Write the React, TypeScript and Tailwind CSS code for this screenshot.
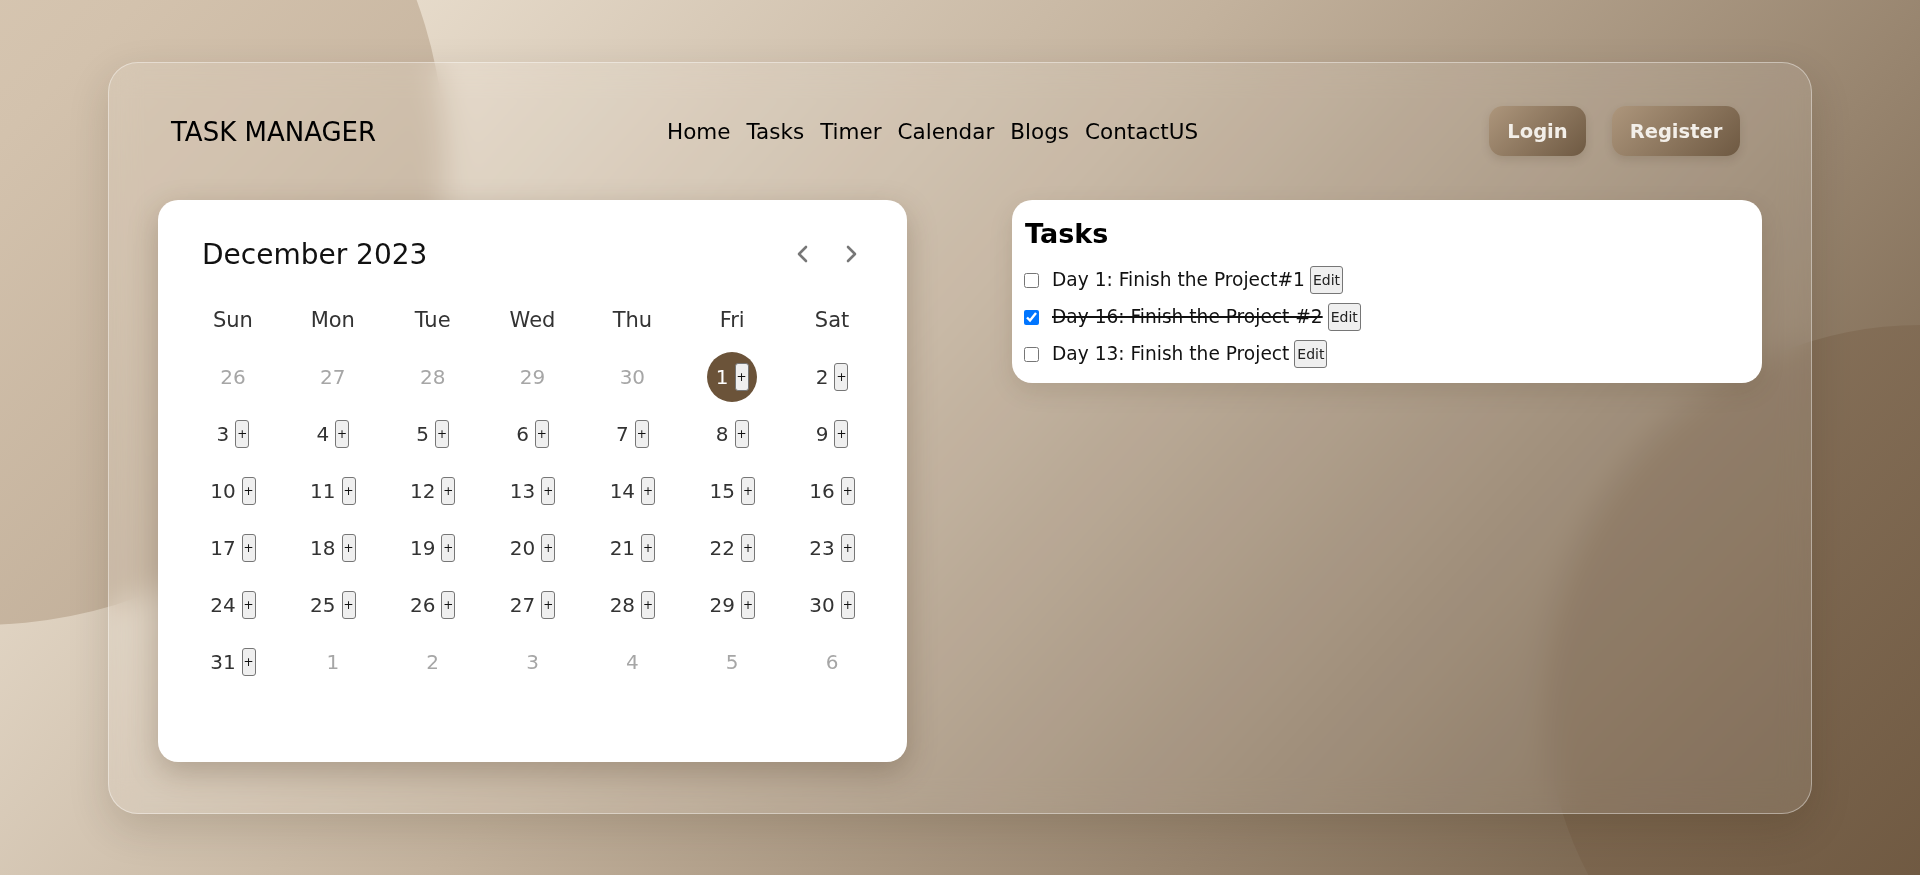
import React from "react";

type Day = { n: number; cur: boolean; sel?: boolean };

const weeks: Day[][] = [
  [
    { n: 26, cur: false },
    { n: 27, cur: false },
    { n: 28, cur: false },
    { n: 29, cur: false },
    { n: 30, cur: false },
    { n: 1, cur: true, sel: true },
    { n: 2, cur: true },
  ],
  [3, 4, 5, 6, 7, 8, 9].map((n) => ({ n, cur: true })),
  [10, 11, 12, 13, 14, 15, 16].map((n) => ({ n, cur: true })),
  [17, 18, 19, 20, 21, 22, 23].map((n) => ({ n, cur: true })),
  [24, 25, 26, 27, 28, 29, 30].map((n) => ({ n, cur: true })),
  [
    { n: 31, cur: true },
    { n: 1, cur: false },
    { n: 2, cur: false },
    { n: 3, cur: false },
    { n: 4, cur: false },
    { n: 5, cur: false },
    { n: 6, cur: false },
  ],
];

const weekdays = ["Sun", "Mon", "Tue", "Wed", "Thu", "Fri", "Sat"];

function PlusButton() {
  return (
    <button className="ml-[6px] flex h-[28px] w-[14px] items-center justify-center rounded-[3px] border border-[#767676] bg-[#efefef] p-0 text-[12px] leading-none text-[#111]">
      +
    </button>
  );
}

function DayCell({ d }: { d: Day }) {
  if (d.sel) {
    return (
      <div className="flex h-[57px] items-center justify-center">
        <div className="flex h-[50px] w-[50px] items-center justify-center rounded-full bg-[#6b5339]">
          <span className="text-[20px] leading-[28px] text-white">{d.n}</span>
          <PlusButton />
        </div>
      </div>
    );
  }
  return (
    <div className="flex h-[57px] items-center justify-center">
      <span
        className={
          d.cur
            ? "text-[20px] leading-[28px] text-[#333]"
            : "text-[20px] leading-[28px] text-[#a6a6a6]"
        }
      >
        {d.n}
      </span>
      {d.cur && <PlusButton />}
    </div>
  );
}

function Chevron({ dir }: { dir: "left" | "right" }) {
  return (
    <button className="flex h-[40px] w-[40px] items-center justify-center">
      <svg width="12" height="18" viewBox="0 0 12 18" fill="none">
        <polyline
          points={dir === "left" ? "10,2 3,9 10,16" : "2,2 9,9 2,16"}
          stroke="#777"
          strokeWidth="2.6"
          strokeLinecap="round"
          strokeLinejoin="round"
        />
      </svg>
    </button>
  );
}

function Calendar() {
  return (
    <div className="h-[562px] w-[749px] rounded-[20px] bg-white px-[25px] pt-[20px] shadow-[0_10px_30px_rgba(60,40,20,0.25)]">
      <div className="flex h-[68px] items-center justify-between">
        <div className="pl-[19px] pt-[2px] text-[28px] leading-none text-[#111]">December 2023</div>
        <div className="flex gap-[10px] pr-[10px]">
          <Chevron dir="left" />
          <Chevron dir="right" />
        </div>
      </div>
      <div className="mt-[4px] grid grid-cols-7">
        {weekdays.map((w) => (
          <div key={w} className="flex h-[57px] items-center justify-center pt-[2px] text-[21px] text-[#333]">
            {w}
          </div>
        ))}
        {weeks.flat().map((d, i) => (
          <DayCell key={i} d={d} />
        ))}
      </div>
    </div>
  );
}

const tasks = [
  { text: "Day 1: Finish the Project#1", done: false },
  { text: "Day 16: Finish the Project #2", done: true },
  { text: "Day 13: Finish the Project", done: false },
];

function Tasks() {
  return (
    <div className="w-[750px] rounded-[20px] bg-white px-[12px] pb-[10px] pt-[16px] shadow-[0_8px_24px_rgba(60,40,20,0.12)]">
      <h2 className="mb-[10px] pl-[1px] text-[27px] font-bold leading-[36px] text-black">Tasks</h2>
      {tasks.map((t) => (
        <div key={t.text} className="flex h-[37px] items-center">
          <input
            type="checkbox"
            defaultChecked={t.done}
            className="m-0 h-[15px] w-[15px] accent-[#0075ff]"
          />
          <span
            className={
              t.done
                ? "ml-[13px] text-[18.6px] leading-[28px] text-[#111] line-through decoration-2"
                : "ml-[13px] text-[18.6px] leading-[28px] text-[#111]"
            }
          >
            {t.text}
          </span>
          <button className="ml-[5px] flex h-[28px] items-center justify-center rounded-[3px] border border-[#767676] bg-[#efefef] px-[2px] text-[14px] leading-none text-[#222]">
            Edit
          </button>
        </div>
      ))}
    </div>
  );
}

export default function App() {
  return (
    <div className="relative h-[875px] w-full overflow-hidden bg-[linear-gradient(132deg,#f8efe1_0%,#c3b29d_45%,#6b563f_100%)] font-['DejaVu_Sans',sans-serif]">
      <div className="absolute left-[-485px] top-[-305px] h-[930px] w-[930px] rounded-full bg-[linear-gradient(135deg,#e2d3bf_0%,#d3c2ad_50%,#baa791_100%)]" />
      <div className="absolute left-[1545px] top-[325px] h-[750px] w-[750px] rounded-full bg-[linear-gradient(135deg,#8d7861_0%,#5e472f_100%)]" />
      <div className="relative flex h-full items-center justify-center">
        <div className="flex h-[752px] w-[1704px] flex-col rounded-[30px] border border-white/40 bg-white/10 shadow-[0_15px_40px_rgba(40,25,10,0.15)] backdrop-blur-[15px]">
          <nav className="mt-[43px] flex h-[50px] items-center justify-between pl-[62px] pr-[71px]">
            <div className="pt-[2px] text-[26px] leading-none text-black">TASK MANAGER</div>
            <div className="flex gap-[16px] pt-[3px] text-[21.5px] text-black">
              <a>Home</a>
              <a>Tasks</a>
              <a>Timer</a>
              <a>Calendar</a>
              <a>Blogs</a>
              <a>ContactUS</a>
            </div>
            <div className="flex gap-[26px]">
              <button className="h-[50px] w-[97px] rounded-[14px] bg-[linear-gradient(135deg,#ad967c,#6e5942)] pt-[2px] text-[19.5px] font-bold text-[#f3efe9] shadow-[0_4px_10px_rgba(40,25,10,0.12)]">
                Login
              </button>
              <button className="h-[50px] w-[128px] rounded-[14px] bg-[linear-gradient(135deg,#ad967c,#6e5942)] pt-[2px] text-[19.5px] font-bold text-[#f3efe9] shadow-[0_4px_10px_rgba(40,25,10,0.12)]">
                Register
              </button>
            </div>
          </nav>
          <div className="mt-[44px] flex items-start justify-between px-[49px]">
            <Calendar />
            <Tasks />
          </div>
        </div>
      </div>
    </div>
  );
}
